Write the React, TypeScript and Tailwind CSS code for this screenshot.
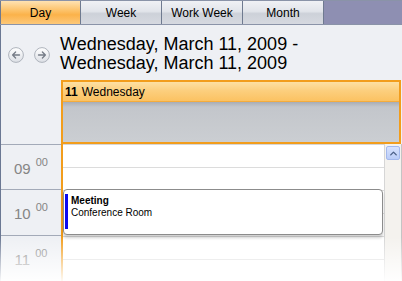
import { ChevronUp } from "lucide-react";

/* ================= SMALL PARTS ================= */

const tabs = ["Day", "Week", "Work Week", "Month"];
const hours = [
  { h: "09", pad: "h-[45px]" },
  { h: "10", pad: "h-[46px]" },
  { h: "11", pad: "h-[46px]" },
];

function NavArrow({ dir }: { dir: "left" | "right" }) {
  const d =
    dir === "left"
      ? "M11.5 8H4.6M7.6 5L4.6 8l3 3"
      : "M4.5 8h6.9M8.4 5l3 3-3 3";
  return (
    <svg width="16" height="16" viewBox="0 0 16 16">
      <defs>
        <linearGradient id={`nav-${dir}`} x1="0" y1="0" x2="0" y2="1">
          <stop offset="0" stopColor="#ffffff" />
          <stop offset="1" stopColor="#dcdfe5" />
        </linearGradient>
      </defs>
      <circle cx="8" cy="8" r="7.4" fill={`url(#nav-${dir})`} stroke="#aeb3bc" strokeWidth="1" />
      <path d={d} fill="none" stroke="#767c87" strokeWidth="1.3" strokeLinecap="round" strokeLinejoin="round" />
    </svg>
  );
}

function Tab({ label, active }: { label: string; active: boolean }) {
  return (
    <div
      className={`w-[81px] h-full flex items-center justify-center border-r border-[#6f7a90] text-[12px] text-black ${
        active
          ? "border-l bg-[linear-gradient(to_bottom,#fee2b2_0%,#fcc36b_40%,#fbb24a_60%,#fdc878_100%)]"
          : "bg-[linear-gradient(to_bottom,#f0f1f5_0%,#e1e4ea_45%,#cdd1d9_55%,#d6d9e0_100%)]"
      }`}
    >
      {label}
    </div>
  );
}

/* ================= MAIN ================= */

export default function App() {
  return (
    <div className="relative w-[402px] h-[281px] overflow-hidden bg-white font-['Liberation_Sans',Arial,sans-serif]">
      {/* TAB BAR */}
      <div className="flex h-[25px] border-t border-b border-[#8a93a8] bg-[#8e8fb2]">
        {tabs.map((t) => (
          <Tab key={t} label={t} active={t === "Day"} />
        ))}
        <div className="flex-1" />
      </div>

      {/* HEADER */}
      <div className="border-l border-[#6b7893] bg-[#eef0f4]">
        <div className="flex h-[55px] pt-[10px] pl-[7px]">
          <div className="flex gap-[10px] mt-[12px]">
            <NavArrow dir="left" />
            <NavArrow dir="right" />
          </div>
          <div className="ml-[10px] text-[18px] leading-[19px] text-black">
            <div>Wednesday, March 11, 2009 -</div>
            <div>Wednesday, March 11, 2009</div>
          </div>
        </div>

        {/* DAY BOX */}
        <div className="ml-[60px] w-[340px] h-[64px] border-2 border-[#f29d1c] flex flex-col">
          <div className="h-[20px] flex items-center pl-[2px] text-[12px] text-black bg-[linear-gradient(to_bottom,#fde0a4_0%,#fccf7e_45%,#fbc262_100%)] border-b border-[#f5ac3c]">
            <span className="font-bold mr-[4px]">11</span>
            <span>Wednesday</span>
          </div>
          <div className="flex-1 bg-[linear-gradient(to_bottom,#a9adb4_0px,#c3c6cb_5px,#cbced2_100%)]" />
        </div>
      </div>

      {/* GRID */}
      <div className="flex">
        {/* time column */}
        <div className="w-[61px] border-l border-[#6b7893] bg-[#eef0f4]">
          {hours.map((r) => (
            <div key={r.h} className={`${r.pad} border-t border-[#a3aab8] flex justify-center pt-[16px]`}>
              <span className="text-[15px] leading-[15px] text-[#858585]">{r.h}</span>
              <span className="ml-[5px] -mt-1 text-[11px] leading-[11px] text-[#858585]">00</span>
            </div>
          ))}
        </div>

        <div className="w-[2px] bg-[#f29d1c]" />

        {/* slots */}
        <div className="relative flex-1 border-t border-r border-[#d6d6d6]">
          {[0, 1, 2, 3, 4, 5].map((i) => (
            <div key={i} className="h-[23px] border-b border-[#dcdcdc]" />
          ))}

          {/* appointment */}
          <div className="absolute left-0 top-[44px] w-[320px] h-[46px] rounded-[4px] border border-[#8c8c8c] bg-white shadow-[0_3px_3px_rgba(0,0,0,0.18)] pl-[7px] pt-[5px]">
            <div className="absolute left-[1px] top-[4px] w-[3px] h-[35px] bg-[#0a0af0]" />
            <div className="text-[10px] leading-[12px] font-bold text-black">Meeting</div>
            <div className="text-[10px] leading-[12px] text-black">Conference Room</div>
          </div>
        </div>

        {/* scrollbar */}
        <div className="w-[17px] bg-[#f4f2ee] border-r border-[#c4c4c4] pt-[2px] pl-[1px]">
          <div className="w-[14px] h-[14px] rounded-[2px] border border-[#a3b8ec] bg-[linear-gradient(to_bottom,#d7e2fd,#b9ccf8)] flex items-center justify-center">
            <ChevronUp className="w-[11px] h-[11px] text-[#4a5f86]" strokeWidth={3} />
          </div>
        </div>
      </div>

      {/* fade at bottom */}
      <div className="absolute left-0 right-0 bottom-0 h-[44px] bg-gradient-to-b from-white/0 via-white/50 to-white/95" />
    </div>
  );
}
